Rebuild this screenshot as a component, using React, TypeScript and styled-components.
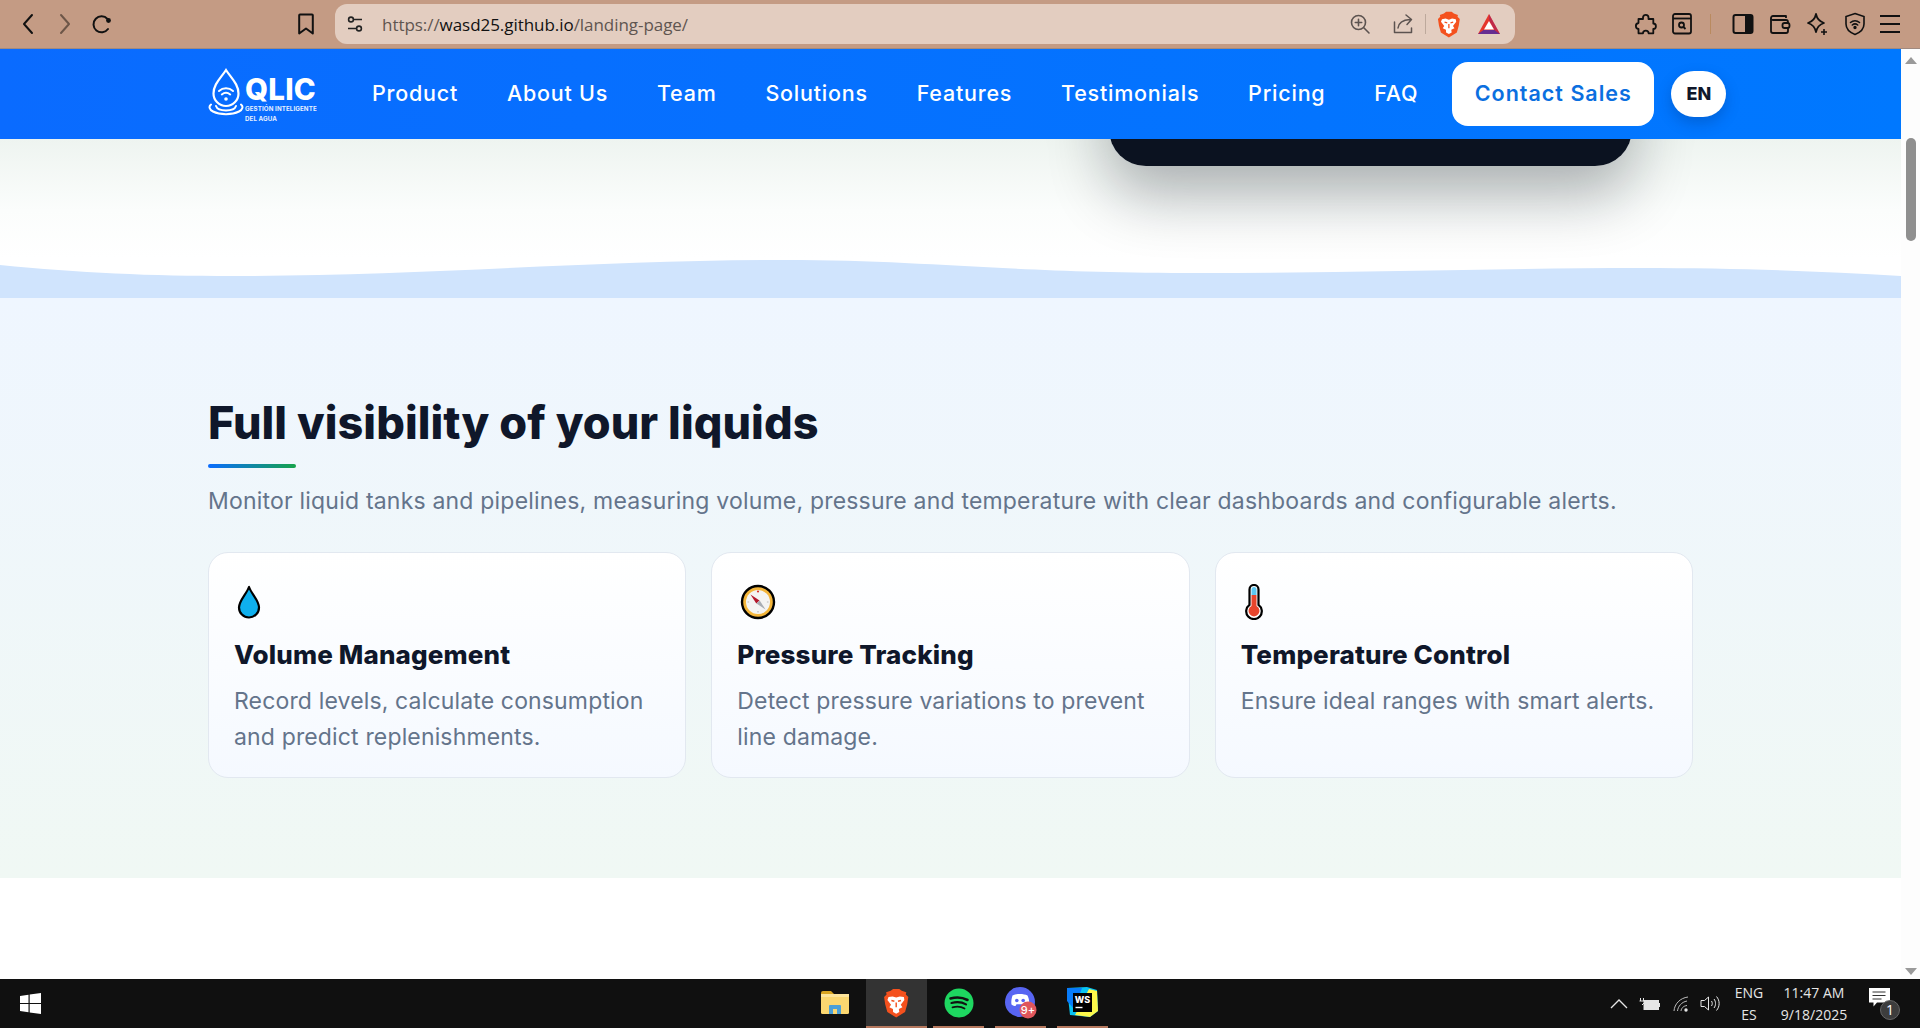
import React from "react";
import styled, { createGlobalStyle } from "styled-components";

const Global = createGlobalStyle`
  html, body { margin: 0; padding: 0; height: 100%; overflow: hidden; background: #fff; }
  * { box-sizing: border-box; }
  #root { height: 100%; }
`;

const Screen = styled.div`
  width: 1920px; height: 1028px; display: flex; flex-direction: column; overflow: hidden;
  font-family: Inter, "Liberation Sans", sans-serif;
`;

/* ---------- browser chrome ---------- */
const Chrome = styled.header`
  height: 49px; flex: none; display: flex; align-items: center; background: #c49b84;
  border-bottom: 1px solid #a08a80; padding: 0 16px 0 14px; color: #111;
`;
const Tool = styled.span<{ $gap?: number; $w?: number }>`
  width: ${p => p.$w ?? 28}px; height: 28px; flex: none; display: flex; align-items: center; justify-content: center;
  margin-left: ${p => p.$gap ?? 0}px;
  svg { display: block; }
`;
const UrlBar = styled.div`
  width: 1180px; height: 40px; margin-left: 15px; flex: none; display: flex; align-items: center;
  background: #e3cdc0; border-radius: 12px; padding: 0 12px 0 6px;
`;
const UrlText = styled.span`
  margin-left: 13px; font-family: "Open Sans", sans-serif; font-size: 17px; letter-spacing: -0.05px; color: #5f5550;
  b { font-weight: 400; color: #111; }
`;
const UrlEnd = styled.div`
  margin-left: auto; display: flex; align-items: center;
`;
const Sep = styled.i<{ $c: string; $before: number; $after: number; $h: number }>`
  width: 1px; height: ${p => p.$h}px; flex: none; background: ${p => p.$c};
  margin: 0 ${p => p.$after}px 0 ${p => p.$before}px;
`;
const ChromeRight = styled.div`
  margin-left: auto; display: flex; align-items: center;
`;

/* ---------- viewport ---------- */
const Viewport = styled.div`
  flex: 1; min-height: 0; display: flex; background: #fff;
`;
const Page = styled.main`
  flex: 1; min-width: 0; display: flex; flex-direction: column; overflow: hidden;
`;
const Scrollbar = styled.div`
  width: 19px; flex: none; display: flex; flex-direction: column; align-items: center; background: #fdfdfd; padding: 8px 0 4px;
`;
const ScrollThumb = styled.div`
  width: 10px; height: 103px; margin-top: 74px; border-radius: 5px; background: #8f8f8f; margin-left: 1px;
`;
const ScrollArrow = styled.div<{ $down?: boolean }>`
  width: 0; height: 0; border-left: 6px solid transparent; border-right: 6px solid transparent;
  ${p => p.$down ? "border-top: 7px solid #9a9a9a; margin-top: auto;" : "border-bottom: 7px solid #9a9a9a;"}
`;

/* ---------- nav ---------- */
const Nav = styled.nav`
  height: 90px; flex: none; position: relative; z-index: 2; display: flex; align-items: center;
  padding-left: 208px; background: linear-gradient(90deg, #0a6bff, #0078ff);
`;
const Logo = styled.div`
  width: 110px; height: 54px; flex: none; display: flex; align-items: flex-start;
`;
const LogoText = styled.div`
  margin-left: 1px; margin-top: 10px; color: #fff; display: flex; flex-direction: column;
`;
const LogoName = styled.span`
  font-size: 29.5px; font-weight: 800; line-height: 24px; letter-spacing: 0.2px;
`;
const LogoSub = styled.span`
  font-size: 6.2px; font-weight: 700; line-height: 10px; margin-top: 3px; white-space: pre-line; letter-spacing: 0.1px; opacity: .9;
`;
const NavLinks = styled.div`
  display: flex; align-items: center; gap: 48.8px; margin-left: 54px; padding-bottom: 3px;
`;
const NavLink = styled.a`
  color: #fff; font-size: 21.5px; font-weight: 500; letter-spacing: 0.78px; white-space: nowrap;
`;
const Contact = styled.button`
  width: 202px; height: 64px; margin-left: 34px; padding: 0 0 3px; border: 0; border-radius: 16px; background: #fff; color: #0b6fe0;
  font: 600 21.5px Inter, sans-serif; letter-spacing: 1px;
`;
const Lang = styled.button`
  width: 55px; height: 46px; margin-left: 17px; padding: 0 0 1px; border: 0; border-radius: 23px; background: #fff; color: #0f172a;
  font: 800 18px Inter, sans-serif; box-shadow: 0 6px 14px rgba(0, 40, 100, .25);
`;

/* ---------- hero remainder ---------- */
const Hero = styled.section`
  height: 159px; flex: none; position: relative; display: flex; flex-direction: column; justify-content: flex-start;
  background: linear-gradient(180deg, #eef4f0 0%, #fbfdfc 45%, #fff 75%);
`;
const PhoneRow = styled.div`
  height: 27px; flex: none; display: flex; justify-content: flex-end; align-items: flex-end; padding-right: 269px;
`;
const Phone = styled.div`
  width: 523px; height: 400px; flex: none; background: #0b1220; border-radius: 37px;
  box-shadow: 0 30px 60px rgba(10, 15, 25, .3);
`;
const Wave = styled.svg`
  display: block; width: 100%; height: 38px; margin-top: auto; flex: none;
`;

/* ---------- features ---------- */
const Features = styled.section`
  height: 580px; flex: none; padding: 95px 208px 0 208px;
  background: linear-gradient(180deg, #eff6ff 0%, #f0f8f4 100%);
`;
const Heading = styled.h2`
  margin: 0; font-size: 45px; line-height: 60px; font-weight: 800; color: #0f172a; letter-spacing: 0.05px;
`;
const Rule = styled.div`
  width: 88px; height: 4px; margin-top: 11px; border-radius: 2px; background: linear-gradient(90deg, #0a6cff, #16a34a);
`;
const Lead = styled.p`
  margin: 15px 0 0; font-size: 23px; line-height: 36px; color: #64748b; letter-spacing: 0.2px; white-space: nowrap;
`;
const Cards = styled.div`
  display: grid; grid-template-columns: repeat(3, 1fr); gap: 25px; margin-top: 33px; width: 1485px;
`;
const Card = styled.article`
  height: 226px; padding: 31px 25px 0; border: 1px solid #e2e8f0; border-radius: 20px;
  background: linear-gradient(180deg, #fff 0%, #f5f9ff 100%);
`;
const CardIcon = styled.div`
  height: 35px; padding-left: 3px; display: flex; align-items: center;
  svg { display: block; }
`;
const CardTitle = styled.h3`
  margin: 18px 0 0; font-size: 26px; line-height: 36px; font-weight: 800; color: #0f172a; letter-spacing: 0.15px;
`;
const CardText = styled.p`
  margin: 11px 0 0; font-size: 23px; line-height: 35.5px; color: #64748b; letter-spacing: 0.15px;
`;

/* ---------- taskbar ---------- */
const Taskbar = styled.footer`
  height: 49px; flex: none; display: flex; align-items: stretch; background: #101010; color: #e6e6e6;
  font-family: "Open Sans", sans-serif; font-size: 14px;
`;
const StartIcon = styled.div`
  width: 60px; display: flex; align-items: center; padding-left: 20px;
`;
const TaskApps = styled.div`
  margin-left: 750px; display: flex; align-items: stretch;
`;
const TaskApp = styled.div<{ $active?: boolean; $w: number; $open?: boolean; $gap?: number }>`
  width: ${p => p.$w}px; margin-left: ${p => p.$gap ?? 0}px; display: flex; align-items: center; justify-content: center;
  background: ${p => p.$active ? "#333" : "transparent"};
  border-bottom: 2px solid ${p => p.$open ? "#b5785e" : "transparent"};
`;
const Tray = styled.div`
  margin-left: auto; display: flex; align-items: center; padding-right: 20px;
`;
const TrayIcon = styled.span<{ $gap: number }>`
  margin-left: ${p => p.$gap}px; display: flex;
`;
const TrayText = styled.div<{ $w: number; $gap: number }>`
  width: ${p => p.$w}px; margin-left: ${p => p.$gap}px; text-align: center; line-height: 22px; font-size: 14px; white-space: nowrap;
`;
const Notif = styled.div`
  margin-left: 20px; position: relative; display: flex; width: 31px; height: 32px;
`;
const NotifBadge = styled.span`
  position: absolute; right: 0; bottom: 0; width: 20px; height: 20px; border-radius: 50%; background: #3d3d3d;
  color: #fff; font-size: 14px; line-height: 18px; text-align: center; border: 1px solid #666;
`;

const S = { fill: "none", stroke: "#111", strokeWidth: 2, strokeLinecap: "round" as const, strokeLinejoin: "round" as const };

const BraveLion = ({ size = 28 }: { size?: number }) => (
  <svg width={size * 0.88} height={size} viewBox="0 0 22 25">
    <path d="M11 24.5 3.600 20 1.800 13.500 .9 7.500 3 5.400 2.600 3.600 6.400 2.200 8.400.8h5.200l2 1.400 3.800 1.400-.4 1.800 2.100 2.100-.9 6-1.800 6.500Z" fill="#f4511e" />
    <path d="M4.600 7.600 8 7l3 1 3-1 3.400.6.4 2.400-3 4 1.400 2-3 1.400L13.600 20 11 21.400 8.400 20l-.1-2.600-3-1.400 1.400-2-3-4Z" fill="#fff" />
    <path d="M7 10.400 9.500 11M15 10.400 12.500 11M11 12v4" stroke="#f4511e" strokeWidth="1.200" fill="none" />
  </svg>
);

const Icons = {
  Back: () => <svg width="14" height="22" viewBox="0 0 14 22"><path d="M11 2 3 11l8 9" {...S} /></svg>,
  Forward: () => <svg width="14" height="22" viewBox="0 0 14 22"><path d="m3 2 8 9-8 9" {...S} stroke="#6d5648" /></svg>,
  Reload: () => (
    <svg width="22" height="22" viewBox="0 0 22 22">
      <path d="M16.500 6A8 8 0 1 0 17 16" {...S} />
      <circle cx="17.500" cy="7.500" r="2.400" fill="#111" />
    </svg>
  ),
  Bookmark: () => <svg width="18" height="24" viewBox="0 0 18 24"><path d="M3 2.500h12a.8.8 0 0 1 .8.8V21.500L9 16.500 2.200 21.500V3.300a.8.8 0 0 1 .8-.8Z" {...S} /></svg>,
  Tune: () => (
    <svg width="18" height="18" viewBox="0 0 18 18" fill="none" stroke="#222" strokeWidth="1.600">
      <circle cx="5" cy="4.500" r="2.400" /><path d="M8 4.500h8M2 13.500h8" /><circle cx="13" cy="13.500" r="2.400" />
    </svg>
  ),
  Zoom: () => (
    <svg width="22" height="22" viewBox="0 0 22 22" fill="none" stroke="#5c5350" strokeWidth="1.600" strokeLinecap="round">
      <circle cx="9.500" cy="9.500" r="7" /><path d="M14.800 14.800 20 20M9.500 6.300v6.400M6.300 9.500h6.400" />
    </svg>
  ),
  Share: () => (
    <svg width="22" height="22" viewBox="0 0 22 22" fill="none" stroke="#5c5350" strokeWidth="1.500" strokeLinecap="round" strokeLinejoin="round">
      <path d="M2.500 9v10.500h17V15M6 15c.6-5 4-8 12-8.500M14 2l5.500 4.500L15 11.500" />
    </svg>
  ),
  Bat: () => (
    <svg width="24" height="22" viewBox="0 0 24 22">
      <path d="M12 1 23 21H1Z" fill="#e5352b" />
      <path d="M1 21h22l-5.500-4H6.500Z" fill="#662d91" />
      <path d="M12 1l11 20-5.500-4L12 7Z" fill="#9e1f63" opacity=".55" />
      <path d="M12 8l5 8.600H7Z" fill="#fff" />
    </svg>
  ),
  Puzzle: () => (
    <svg width="24" height="24" viewBox="0 0 24 24" {...S} strokeWidth="1.800">
      <path d="M9 5.500C9 2 14.500 2 14.500 5.500V7h4.800v4.500c3.500 0 3.500 5.500 0 5.500v4.300H14.600c0-3.500-5.600-3.500-5.600 0H4.500V17c-3.500-.5-3.500-5.500 0-6V7H9Z" />
    </svg>
  ),
  Reader: () => (
    <svg width="22" height="24" viewBox="0 0 22 24" fill="none" stroke="#111" strokeWidth="1.800">
      <rect x="2" y="2" width="18" height="19.500" rx="2" /><path d="M2 6.500h18" />
      <circle cx="10.500" cy="13" r="2.500" /><path d="m12.500 15 2 2" />
    </svg>
  ),
  Sidebar: () => (
    <svg width="22" height="22" viewBox="0 0 22 22">
      <rect x="1.500" y="2" width="19" height="18" rx="2" fill="none" stroke="#111" strokeWidth="2" />
      <path d="M13 2h6a2 2 0 0 1 2 2v14a2 2 0 0 1-2 2h-6Z" fill="#111" />
    </svg>
  ),
  Wallet: () => (
    <svg width="22" height="22" viewBox="0 0 22 22" fill="none" stroke="#111" strokeWidth="1.800" strokeLinejoin="round">
      <path d="M17 5V3H4a2 2 0 0 0-2 2v13a2 2 0 0 0 2 2h13a2 2 0 0 0 2-2v-3" />
      <path d="M2 5.500c0 1 1 1.500 2 1.500h13a2 2 0 0 1 2 2v1" />
      <rect x="13.500" y="10" width="7" height="5" rx="2" />
    </svg>
  ),
  Sparkle: () => (
    <svg width="24" height="24" viewBox="0 0 24 24" fill="none" stroke="#111" strokeWidth="1.800" strokeLinejoin="round">
      <path d="M11 2c1 5 3.500 7.500 8 9-4.500 1.500-7 4-8 9-1-5-3.500-7.500-8-9 4.500-1.500 7-4 8-9Z" />
      <path d="M19 17v6M16 20h6" strokeWidth="1.600" />
    </svg>
  ),
  Vpn: () => (
    <svg width="22" height="24" viewBox="0 0 22 24" fill="none" stroke="#111" strokeWidth="1.600" strokeLinecap="round">
      <path d="M11 1.500 20 4.500V12c0 5-4 8.500-9 10.500C6 20.500 2 17 2 12V4.500Z" />
      <path d="M6.500 10.500c2.600-2.200 6.400-2.200 9 0M8.300 13c1.600-1.300 3.800-1.300 5.400 0" />
      <circle cx="11" cy="15.500" r=".9" fill="#111" />
    </svg>
  ),
  Menu: () => <svg width="22" height="20" viewBox="0 0 22 20"><path d="M1 2h20M1 10h20M1 18h20" stroke="#111" strokeWidth="2" /></svg>,
  Logo: () => (
    <svg width="36" height="54" viewBox="0 0 36 54" fill="none" stroke="#fff" strokeLinecap="round">
      <path d="M18 3C13 11 5.500 17 5.500 26.500a12.500 12.500 0 0 0 25 0C30.500 17 23 11 18 3Z" strokeWidth="2.200" />
      <path d="M11 24c4-3.600 10-3.600 14 0M13.800 27.500c2.500-2 5.900-2 8.400 0" strokeWidth="2" />
      <circle cx="18" cy="32" r="1.800" fill="#fff" stroke="none" />
      <path d="M3 37.500c-2.500 2-1.800 5 2 7 7 3.500 19 3.500 26 0 3.800-2 4.500-5 2-7" strokeWidth="2" />
      <path d="M8 39c1 3 5 4.500 10 4.500S27 42 28 39" strokeWidth="2" />
    </svg>
  ),
  Drop: () => (
    <svg width="24" height="34" viewBox="0 0 24 34">
      <path d="M12 2C9.500 9 2 15.500 2 22.500a10 10 0 0 0 20 0C22 15.500 14.500 9 12 2Z" fill="#0fb0ee" stroke="#000" strokeWidth="2.200" strokeLinejoin="round" />
    </svg>
  ),
  Compass: () => (
    <svg width="36" height="36" viewBox="0 0 36 36">
      <circle cx="18" cy="18" r="16" fill="#f3b53a" stroke="#000" strokeWidth="2.400" />
      <circle cx="18" cy="18" r="12" fill="#f4f4f2" />
      <circle cx="18" cy="7.500" r="1.100" fill="#d8342c" />
      <path d="M18 28.500v-1.600M7.500 18h1.600M28.500 18h-1.600" stroke="#b9b9b9" strokeWidth="1.200" />
      <path d="m10.500 10.500 5.800 9 3.200-3Z" fill="#b3172b" />
      <path d="m25.500 25.500-9-6 3.200-3Z" fill="#a8adb3" />
    </svg>
  ),
  Thermo: () => (
    <svg width="20" height="36" viewBox="0 0 20 36">
      <path d="M5.500 5.500a4.500 4.500 0 0 1 9 0v15.400a7.800 7.800 0 1 1-9 0Z" fill="#fff" stroke="#000" strokeWidth="2.200" />
      <path d="M7.500 5.500a2.500 2.500 0 0 1 5 0V11h-5Z" fill="#5cc8f2" />
      <path d="M7.500 11h5v11a5.500 5.500 0 1 1-5 0Z" fill="#e8452c" />
    </svg>
  ),
  Windows: () => (
    <svg width="21" height="21" viewBox="0 0 21 21" fill="#fff">
      <path d="M0 3 8.500 1.800V10H0ZM9.700 1.600 21 0v10H9.700ZM0 11h8.500v8.200L0 18ZM9.700 11H21v10L9.700 19.400Z" />
    </svg>
  ),
  Explorer: () => (
    <svg width="28" height="24" viewBox="0 0 28 24">
      <path d="M0 2a2 2 0 0 1 2-2h8l3 3h-13Z" fill="#d9a521" />
      <rect y="3" width="28" height="20" rx="1.500" fill="#fbd770" />
      <rect y="3" width="28" height="3" fill="#fde59b" />
      <path d="M8 23v-8a1 1 0 0 1 1-1h10a1 1 0 0 1 1 1v8h-4v-5h-4v5Z" fill="#4a9fd8" />
    </svg>
  ),
  Spotify: () => (
    <svg width="30" height="30" viewBox="0 0 30 30" fill="none">
      <circle cx="15" cy="15" r="14.500" fill="#1ed760" />
      <path d="M6.500 10.500c5.500-1.600 12-1.200 17 1.500" stroke="#111" strokeWidth="2.600" strokeLinecap="round" />
      <path d="M7.500 15c5-1.300 10.500-.9 14.500 1.400" stroke="#111" strokeWidth="2.200" strokeLinecap="round" />
      <path d="M8.500 19.300c4.200-1 8.800-.7 12 1.200" stroke="#111" strokeWidth="1.800" strokeLinecap="round" />
    </svg>
  ),
  Discord: () => (
    <svg width="32" height="32" viewBox="0 0 32 32">
      <circle cx="15" cy="15" r="15" fill="#5865f2" />
      <path d="M7.500 8.500c4-2 11-2 15 0 1.500 3 2 6.500 1.500 9-1.500 1-3 1.500-4 1.500l-1-1.800h-7.500L10.500 19c-1 0-2.500-.5-4-1.500-.5-2.500 0-6 1-9Z" fill="#fff" />
      <circle cx="11.800" cy="13.500" r="1.800" fill="#5865f2" /><circle cx="18.200" cy="13.500" r="1.800" fill="#5865f2" />
      <circle cx="23" cy="23" r="8.500" fill="#e0565b" />
      <text x="23" y="27" textAnchor="middle" fontFamily="Inter, sans-serif" fontSize="11" fontWeight="500" fill="#fff">9+</text>
    </svg>
  ),
  Webstorm: () => (
    <svg width="31" height="31" viewBox="0 0 31 31">
      <path d="M0 1 20 0 30 3 31 24 23 30 3 28Z" fill="#07c3f2" />
      <path d="M22 2 30 4 31 24 23 30 8 28Z" fill="#fcf84a" />
      <path d="M0 1 15 1 7 22 0 14Z" fill="#087cfa" />
      <rect x="6" y="6" width="19" height="19" fill="#000" />
      <text x="15.500" y="15.500" textAnchor="middle" fontFamily="Inter, sans-serif" fontSize="9" fontWeight="800" fill="#fff">WS</text>
      <path d="M8.500 20.500h7" stroke="#fff" strokeWidth="1.400" />
    </svg>
  ),
  Caret: () => <svg width="18" height="10" viewBox="0 0 18 10"><path d="m1 9 8-8 8 8" fill="none" stroke="#e6e6e6" strokeWidth="1.300" /></svg>,
  Battery: () => (
    <svg width="21" height="14" viewBox="0 0 21 14" fill="none" stroke="#e6e6e6">
      <path d="M1.500 1v3M4.500 1v3M.5 4h5v1.500L3 8" strokeWidth="1" />
      <rect x="5" y="3.500" width="14.500" height="9" fill="#e6e6e6" />
      <path d="M20.500 6v4" strokeWidth="1.200" />
    </svg>
  ),
  Wifi: () => (
    <svg width="16" height="16" viewBox="0 0 16 16" fill="none" stroke="#bdbdbd" strokeWidth="1">
      <path d="M1 15C1.500 8 7 2 15 1M4.500 15C5 10.500 8.500 6 14 5M8 15c.3-2.500 2-5 6-5.500" />
      <circle cx="13" cy="14" r="1.700" fill="#e6e6e6" stroke="none" />
    </svg>
  ),
  Speaker: () => (
    <svg width="21" height="17" viewBox="0 0 21 17" fill="none" stroke="#e6e6e6" strokeWidth="1">
      <path d="M1 5.500h3.500L8.500 2v13l-4-3.500H1ZM11.500 6c1 1.500 1 3.500 0 5M14 4c2 2.500 2 6.500 0 9M16.500 1.500c3.500 4 3.500 10 0 14" />
    </svg>
  ),
  Message: () => (
    <svg width="21" height="19" viewBox="0 0 21 19">
      <path d="M0 0h21v14.500H8L4.500 18.500V14.500H0Z" fill="#fff" />
      <path d="M3.500 4h13M3.500 7.500h13M3.500 11h9" stroke="#333" strokeWidth="1" />
    </svg>
  ),
};

const cards = [
  { title: "Volume Management", text: "Record levels, calculate consumption and predict replenishments.", icon: <Icons.Drop /> },
  { title: "Pressure Tracking", text: "Detect pressure variations to prevent line damage.", icon: <Icons.Compass /> },
  { title: "Temperature Control", text: "Ensure ideal ranges with smart alerts.", icon: <Icons.Thermo /> },
];

const links = ["Product", "About Us", "Team", "Solutions", "Features", "Testimonials", "Pricing", "FAQ"];

export default function App() {
  return (
    <Screen>
      <Global />
      <Chrome>
        <Tool><Icons.Back /></Tool>
        <Tool $gap={9}><Icons.Forward /></Tool>
        <Tool $gap={9}><Icons.Reload /></Tool>
        <Tool $gap={176}><Icons.Bookmark /></Tool>
        <UrlBar>
          <Tool><Icons.Tune /></Tool>
          <UrlText>https://<b>wasd25.github.io</b>/landing-page/</UrlText>
          <UrlEnd>
            <Tool><Icons.Zoom /></Tool>
            <Tool $gap={15}><Icons.Share /></Tool>
            <Sep $c="#bda99c" $before={8} $after={10} $h={20} />
            <Tool $w={26}><BraveLion size={27} /></Tool>
            <Tool $gap={13}><Icons.Bat /></Tool>
          </UrlEnd>
        </UrlBar>
        <ChromeRight>
          <Tool><Icons.Puzzle /></Tool>
          <Tool $gap={8}><Icons.Reader /></Tool>
          <Sep $c="#b98a5f" $before={14} $after={18} $h={20} />
          <Tool><Icons.Sidebar /></Tool>
          <Tool $gap={9}><Icons.Wallet /></Tool>
          <Tool $gap={9}><Icons.Sparkle /></Tool>
          <Tool $gap={10}><Icons.Vpn /></Tool>
          <Tool $gap={7}><Icons.Menu /></Tool>
        </ChromeRight>
      </Chrome>

      <Viewport>
        <Page>
          <Nav>
            <Logo>
              <Icons.Logo />
              <LogoText>
                <LogoName>QLIC</LogoName>
                <LogoSub>{"GESTIÓN INTELIGENTE\nDEL AGUA"}</LogoSub>
              </LogoText>
            </Logo>
            <NavLinks>
              {links.map(l => <NavLink key={l}>{l}</NavLink>)}
            </NavLinks>
            <Contact>Contact Sales</Contact>
            <Lang>EN</Lang>
          </Nav>
          <Hero>
            <PhoneRow><Phone /></PhoneRow>
            <Wave viewBox="0 0 1901 38" preserveAspectRatio="none">
              <path d="M0 5C80 13 150 16 233 16C420 16 600 0 784 0C930 0 1000 13 1200 13C1350 13 1500 8 1640 8C1740 8 1820 11 1901 16V38H0Z" fill="#d0e4fd" />
            </Wave>
          </Hero>
          <Features>
            <Heading>Full visibility of your liquids</Heading>
            <Rule />
            <Lead>Monitor liquid tanks and pipelines, measuring volume, pressure and temperature with clear dashboards and configurable alerts.</Lead>
            <Cards>
              {cards.map(c => (
                <Card key={c.title}>
                  <CardIcon>{c.icon}</CardIcon>
                  <CardTitle>{c.title}</CardTitle>
                  <CardText>{c.text}</CardText>
                </Card>
              ))}
            </Cards>
          </Features>
        </Page>
        <Scrollbar>
          <ScrollArrow />
          <ScrollThumb />
          <ScrollArrow $down />
        </Scrollbar>
      </Viewport>

      <Taskbar>
        <StartIcon><Icons.Windows /></StartIcon>
        <TaskApps>
          <TaskApp $w={50}><Icons.Explorer /></TaskApp>
          <TaskApp $w={61} $gap={6} $active $open><BraveLion size={30} /></TaskApp>
          <TaskApp $w={51} $gap={6} $open><Icons.Spotify /></TaskApp>
          <TaskApp $w={51} $gap={11} $open><Icons.Discord /></TaskApp>
          <TaskApp $w={51} $gap={11} $open><Icons.Webstorm /></TaskApp>
        </TaskApps>
        <Tray>
          <TrayIcon $gap={0}><Icons.Caret /></TrayIcon>
          <TrayIcon $gap={11}><Icons.Battery /></TrayIcon>
          <TrayIcon $gap={13}><Icons.Wifi /></TrayIcon>
          <TrayIcon $gap={11}><Icons.Speaker /></TrayIcon>
          <TrayText $w={40} $gap={8}>ENG<br />ES</TrayText>
          <TrayText $w={70} $gap={10}>11:47 AM<br />9/18/2025</TrayText>
          <Notif>
            <Icons.Message />
            <NotifBadge>1</NotifBadge>
          </Notif>
        </Tray>
      </Taskbar>
    </Screen>
  );
}
